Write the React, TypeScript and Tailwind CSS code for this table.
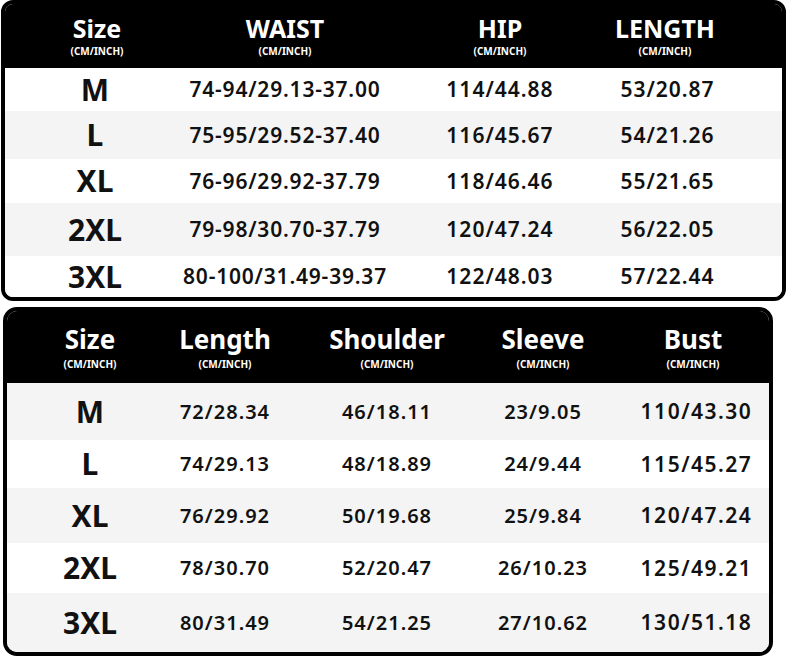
const font = { fontFamily: '"Noto Sans", "Open Sans", sans-serif' }

const topRows = [
  { size: 'M', h: 'h-[43px]', bg: 'bg-white', cells: ['74-94/29.13-37.00', '114/44.88', '53/20.87'] },
  { size: 'L', h: 'h-[48px]', bg: 'bg-[#f4f4f4]', cells: ['75-95/29.52-37.40', '116/45.67', '54/21.26'] },
  { size: 'XL', h: 'h-[44px]', bg: 'bg-white', cells: ['76-96/29.92-37.79', '118/46.46', '55/21.65'] },
  { size: '2XL', h: 'h-[53px]', bg: 'bg-[#f4f4f4]', cells: ['79-98/30.70-37.79', '120/47.24', '56/22.05'] },
  { size: '3XL', h: 'h-[41px]', bg: 'bg-white', cells: ['80-100/31.49-39.37', '122/48.03', '57/22.44'] },
]

const bottomRows = [
  { size: 'M', h: 'h-[57px]', bg: 'bg-[#f4f4f4]', cells: ['72/28.34', '46/18.11', '23/9.05', '110/43.30'] },
  { size: 'L', h: 'h-[48px]', bg: 'bg-white', cells: ['74/29.13', '48/18.89', '24/9.44', '115/45.27'] },
  { size: 'XL', h: 'h-[55px]', bg: 'bg-[#f4f4f4]', cells: ['76/29.92', '50/19.68', '25/9.84', '120/47.24'] },
  { size: '2XL', h: 'h-[50px]', bg: 'bg-white', cells: ['78/30.70', '52/20.47', '26/10.23', '125/49.21'] },
  { size: '3XL', h: 'h-[59px]', bg: 'bg-[#f4f4f4]', cells: ['80/31.49', '54/21.25', '27/10.62', '130/51.18'] },
]

function HeadCell({ title, big, extra = '' }: { title: string; big?: boolean; extra?: string }) {
  return (
    <div className={`flex flex-col items-center justify-center whitespace-nowrap ${extra}`}>
      <span className={big ? 'text-[26px] font-bold leading-[26px]' : 'text-[25px] font-bold leading-[25px]'}>
        {title}
      </span>
      <span className={`${big ? 'mt-[7px]' : 'mt-[5px]'} text-[10px] font-bold leading-[10px]`}>(CM/INCH)</span>
    </div>
  )
}

function SizeCell({ v }: { v: string }) {
  return <div className="flex items-center justify-center text-[30px] font-bold leading-none">{v}</div>
}

// text size and tracking come from the caller
function DataCell({ v, extra }: { v: string; extra: string }) {
  return (
    <div className={`flex items-center justify-center whitespace-nowrap font-semibold leading-none ${extra}`}>
      {v}
    </div>
  )
}

export default function App() {
  return (
    <div className="h-[658px] w-[787px] overflow-hidden bg-white text-[#111]" style={font}>
      {/* Table 1 */}
      <div className="ml-[1px] w-[785px] overflow-hidden rounded-[12px] border-[4px] border-black bg-white">
        <div className="grid h-[64px] grid-cols-[180px_200px_230px_1fr] bg-black text-white">
          <HeadCell title="Size" extra="pl-[4px]" />
          <HeadCell title="WAIST" />
          <HeadCell title="HIP" />
          <HeadCell title="LENGTH" extra="pr-[70px]" />
        </div>
        {topRows.map((r) => (
          <div key={r.size} className={`grid grid-cols-[180px_200px_230px_1fr] ${r.h} ${r.bg}`}>
            <SizeCell v={r.size} />
            <DataCell v={r.cells[0]} extra="text-[21px] tracking-[0.8px]" />
            <DataCell v={r.cells[1]} extra="text-[21px] tracking-[1px]" />
            <DataCell v={r.cells[2]} extra="text-[21px] tracking-[1px] pr-[62px]" />
          </div>
        ))}
      </div>

      {/* Table 2 */}
      <div className="ml-[3px] mt-[6px] w-[770px] overflow-hidden rounded-[14px] border-[4px] border-black bg-white">
        <div className="grid h-[72px] grid-cols-[166px_104px_220px_92px_1fr] bg-black text-white">
          <HeadCell title="Size" big />
          <HeadCell title="Length" big />
          <HeadCell title="Shoulder" big />
          <HeadCell title="Sleeve" big />
          <HeadCell title="Bust" big extra="pl-[28px]" />
        </div>
        {bottomRows.map((r) => (
          <div key={r.size} className={`grid grid-cols-[166px_104px_220px_92px_1fr] ${r.h} ${r.bg}`}>
            <SizeCell v={r.size} />
            <DataCell v={r.cells[0]} extra="text-[20px] tracking-[1px]" />
            <DataCell v={r.cells[1]} extra="text-[20px] tracking-[1px]" />
            <DataCell v={r.cells[2]} extra="text-[20px] tracking-[1px]" />
            <DataCell v={r.cells[3]} extra="pl-[35px] text-[21px] tracking-[1.5px]" />
          </div>
        ))}
      </div>
    </div>
  )
}
